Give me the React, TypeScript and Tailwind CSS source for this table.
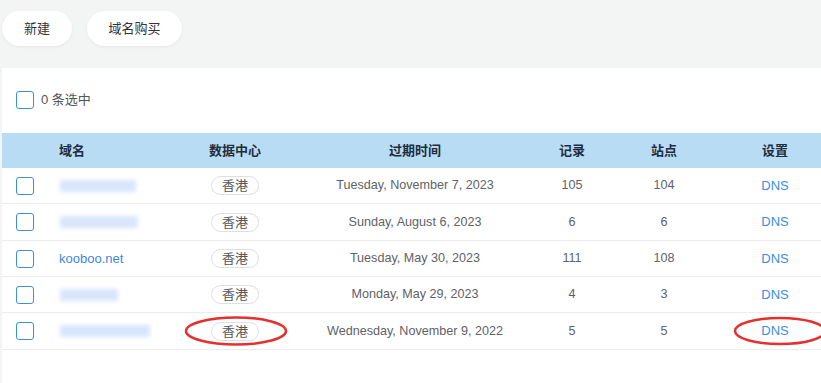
import React from "react";

const font = { fontFamily: '"Liberation Sans", "Noto Sans CJK SC", sans-serif' };

function Box() {
  return <div className="w-[18px] h-[18px] rounded-[3px] border-[1.5px] border-[#3d8fd6] bg-white" />;
}

type Row = { name?: string; blur?: number; date: string; rec: string; site: string; h: string };
const rows: Row[] = [
  { blur: 76, date: "Tuesday, November 7, 2023", rec: "105", site: "104", h: "h-[36px]" },
  { blur: 78, date: "Sunday, August 6, 2023", rec: "6", site: "6", h: "h-[37px]" },
  { name: "kooboo.net", date: "Tuesday, May 30, 2023", rec: "111", site: "108", h: "h-[36px]" },
  { blur: 58, date: "Monday, May 29, 2023", rec: "4", site: "3", h: "h-[36px]" },
  { blur: 90, date: "Wednesday, November 9, 2022", rec: "5", site: "5", h: "h-[37px]" },
];

const cols = "grid grid-cols-[57px_126px_100px_260px_54px_130px_92px] items-center";

export default function App() {
  return (
    <div className="w-[821px] h-[383px] bg-[#f3f4f4] relative overflow-hidden" style={font}>
      <div className="flex gap-[15px] pl-[2px] pt-[11px]">
        <button className="w-[70px] h-[35px] rounded-full bg-white text-[13px] text-[#333] shadow-[0_1px_3px_rgba(0,0,0,0.06)]">新建</button>
        <button className="w-[95px] h-[35px] rounded-full bg-white text-[13px] text-[#333] shadow-[0_1px_3px_rgba(0,0,0,0.06)]">域名购买</button>
      </div>
      <div className="ml-[2px] mt-[22px] bg-white h-[400px]">
        <div className="flex items-center gap-[7px] pl-[14px] pt-[23px] h-[65px] pb-[24px]">
          <Box />
          <span className="text-[13px] text-[#555]">0 条选中</span>
        </div>
        <div className={`${cols} h-[35px] bg-[#b9dcf5] text-[13px] font-bold text-[#1f2d3d]`}>
          <div />
          <div>域名</div>
          <div className="text-center">数据中心</div>
          <div className="text-center">过期时间</div>
          <div className="text-center">记录</div>
          <div className="text-center">站点</div>
          <div className="text-center">设置</div>
        </div>
        {rows.map((r, i) => (
          <div key={i} className={`${cols} ${r.h} border-b border-[#ebeef0] text-[13px] text-[#606266]`}>
            <div className="pl-[14px]"><Box /></div>
            <div>
              {r.name ? (
                <span className="text-[#3d8ad8]">{r.name}</span>
              ) : (
                <div className="h-[12px] bg-[#d8e6fb] blur-[2px] ml-[1px]" style={{ width: r.blur }} />
              )}
            </div>
            <div className="flex justify-center">
              <span className="px-[10px] h-[19px] leading-[17px] rounded-full border border-[#dcdfe6] text-[#555]">香港</span>
            </div>
            <div className="text-center text-[12.6px]">{r.date}</div>
            <div className="text-center text-[12.6px]">{r.rec}</div>
            <div className="text-center text-[12.6px]">{r.site}</div>
            <div className="text-center text-[#3a8ee6]">DNS</div>
          </div>
        ))}
      </div>
      <svg className="absolute left-0 top-0 pointer-events-none" width="821" height="383">
        <ellipse cx="236" cy="331" rx="50" ry="13.5" fill="none" stroke="#e53030" strokeWidth="2.5" />
        <ellipse cx="780" cy="331" rx="45" ry="13" fill="none" stroke="#e53030" strokeWidth="2.5" />
      </svg>
    </div>
  );
}
